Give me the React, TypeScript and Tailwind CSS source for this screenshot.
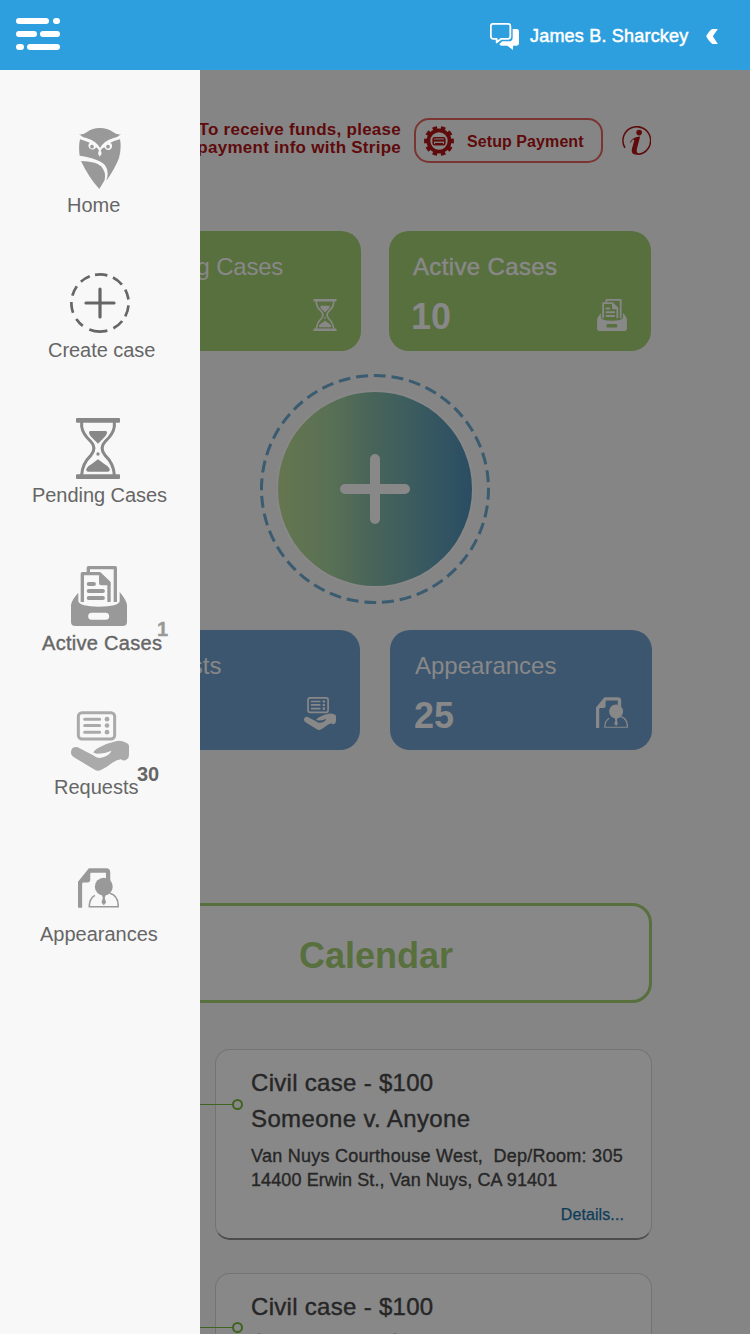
import type { ReactNode } from "react";

type IconProps = { className?: string };

function OwlIcon({ className }: IconProps) {
  return (
    <svg viewBox="0 0 126 183" className={className} fill="currentColor">
      <path d="M0 19Q14 21 24 12Q40 0 62 0Q86 0 102 12Q112 21 126 19Q118 27 102 31Q76 38 63 60Q50 38 24 31Q8 27 0 19Z" />
      <path
        fillRule="evenodd"
        d="M3 34Q20 39 32 44A12 12 0 1 0 51 58Q57 61 60 68Q56 74 58 79L62 86L67 79Q69 74 65 68Q68 61 76 58A12 12 0 1 0 94 44Q106 38 123 34Q128 60 120 90Q108 122 82 158Q92 130 78 112Q62 92 2 83Q-2 55 3 34Z"
      />
      <circle cx="39" cy="56" r="5.5" />
      <circle cx="87" cy="56" r="5.5" />
      <path d="M6 99Q50 100 66 115Q82 132 77 156L61 183Q30 150 6 99Z" />
    </svg>
  );
}

function CreateIcon({ className }: IconProps) {
  return (
    <svg viewBox="0 0 60 60" className={className} fill="none" stroke="currentColor">
      <circle
        cx="30"
        cy="30"
        r="28.6"
        strokeWidth="2.7"
        pathLength={360}
        strokeDasharray="25 12 23 12 21 12 23 11 23 13 37 15 19 14 22 13 21 12 21 11"
        transform="rotate(-100 30 30)"
      />
      <path d="M30 16V44M16 30H44" strokeWidth="3.2" strokeLinecap="round" />
    </svg>
  );
}

function HourglassIcon({ className }: IconProps) {
  return (
    <svg viewBox="0 0 132 183" className={className} fill="currentColor">
      <rect width="132" height="14" rx="3" />
      <rect y="169" width="132" height="14" rx="3" />
      <g fill="none" stroke="currentColor" strokeWidth="9">
        <path d="M17 12V26Q20 48 44 70Q64 91 44 113Q19 137 17 171" />
        <path d="M115 12V26Q112 48 88 70Q68 91 88 113Q113 137 115 171" />
      </g>
      <path d="M43 39H89Q95 40 92 48Q90 55 80 63L66 77L52 63Q42 55 40 48Q37 40 43 39Z" />
      <path d="M36 161Q28 160 32 151Q35 144 48 137L66 124L84 137Q97 144 100 151Q104 160 96 161Z" />
      <circle cx="66" cy="108" r="5" />
    </svg>
  );
}

function DrawerIcon({ className }: IconProps) {
  return (
    <svg viewBox="0 0 168 180" className={className} fill="currentColor">
      <g fill="none" stroke="currentColor" strokeWidth="10">
        <path d="M52 20V5H133V108" strokeLinejoin="round" />
        <path d="M34 108V23H86L114 50V108" strokeLinejoin="round" />
        <path d="M53 54H69M53 75H96M53 96H96" strokeWidth="11.5" strokeLinecap="round" />
      </g>
      <path d="M84 20L118 53V58H91Q84 58 84 51Z" />
      <path
        fillRule="evenodd"
        d="M0 116Q2 102 22 80V106Q26 122 84 122Q142 122 146 106V78Q166 102 168 116V167Q168 180 155 180H13Q0 180 0 167ZM62 140A10.500 10.500 0 0 0 62 161H104A10.500 10.500 0 0 0 104 140Z"
      />
    </svg>
  );
}

function RequestIcon({ className }: IconProps) {
  return (
    <svg viewBox="0 0 174 179" className={className} fill="currentColor">
      <rect x="22" y="4.500" width="109" height="79" rx="11" fill="none" stroke="currentColor" strokeWidth="9" />
      <path d="M41 24H86M41 43H86M41 63H86" stroke="currentColor" strokeWidth="9" strokeLinecap="round" />
      <circle cx="108" cy="24" r="7" />
      <circle cx="108" cy="43" r="7" />
      <circle cx="108" cy="63" r="7" />
      <path d="M20 108Q0 106 0 124Q0 133 10 139L70 175Q80 182 91 176Q108 168 124 155Q138 145 150 144Q154 148 162 148Q174 144 174 130V104Q174 98 164 94Q148 86 132 91Q108 96 84 109Q70 116 67 124L76 128Q102 128 122 118Q114 136 90 140Q76 142 68 133Z" />
    </svg>
  );
}

function AppearanceIcon({ className }: IconProps) {
  return (
    <svg viewBox="0 0 124 120" className={className} fill="currentColor">
      <path d="M6 120V44L36 7H85Q91 7 91 13V36" fill="none" stroke="currentColor" strokeWidth="13" />
      <path d="M2 43L32 4H37V36Q37 43 30 43Z" />
      <circle cx="78" cy="56" r="27" />
      <path d="M51 82Q34 92 34 117H122Q122 82 96 76" fill="none" stroke="currentColor" strokeWidth="4.500" />
      <path d="M72 80H84L81 90L85 104L78 112L71 104L75 90Z" />
    </svg>
  );
}

function ChatIcon({ className }: IconProps) {
  return (
    <svg viewBox="0 0 87 81" className={className} fill="currentColor">
      <path
        d="M9 2.500H54Q61 2.500 61 9.500V40Q61 47.500 54 47.500H34L20 58V47.500H9Q2.500 47.500 2.500 40V9.500Q2.500 2.500 9 2.500Z"
        fill="none"
        stroke="currentColor"
        strokeWidth="5.5"
        strokeLinejoin="round"
      />
      <path d="M68 18H80Q87 18 87 25V61Q87 68 80 68H69V81L52 68H35Q29 68 28 63L37 55H56Q68 55 68 44Z" />
    </svg>
  );
}

function GearCardIcon({ className }: IconProps) {
  return (
    <svg viewBox="0 0 30 30" className={className} fill="none" stroke="currentColor">
      <circle cx="15" cy="15" r="10.600" strokeWidth="3.800" />
      <circle cx="15" cy="15" r="13.200" strokeWidth="3.400" pathLength={100} strokeDasharray="5.500 4.500" transform="rotate(-82 15 15)" />
      <rect x="9.200" y="11.700" width="11.600" height="7" rx="1.500" strokeWidth="1.600" />
      <path d="M9 14.500H21" strokeWidth="2.200" />
      <path d="M11 17.600H19" strokeWidth="1.400" />
    </svg>
  );
}

function InfoIcon({ className }: IconProps) {
  return (
    <svg viewBox="0 0 88 88" className={className} fill="currentColor">
      <path d="M9 66A42 42 0 1 1 48 86" fill="none" stroke="currentColor" strokeWidth="4.5" />
      <circle cx="52" cy="20" r="8.500" />
      <path d="M24 49Q34 33 55 32L45 70Q43 82 51 84L48 87H44Q26 87 30 70L37 45Q38 39 33 42Q30 44 26 51Z" />
    </svg>
  );
}

function MenuIcon() {
  return (
    <div className="flex w-11 flex-col gap-[7px]">
      <div className="flex justify-between">
        <span className="h-[6px] w-[33px] rounded-full bg-white" />
        <span className="h-[6px] w-[7px] rounded-full bg-white" />
      </div>
      <div className="flex justify-between">
        <span className="h-[6px] w-[21px] rounded-full bg-white" />
        <span className="h-[6px] w-[20px] rounded-full bg-white" />
      </div>
      <div className="flex justify-between">
        <span className="h-[6px] w-[8px] rounded-full bg-white" />
        <span className="h-[6px] w-[33px] rounded-full bg-white" />
      </div>
    </div>
  );
}

function NavItem({
  size,
  icon,
  label,
  labelClass,
  badge,
  badgeClass = "",
}: {
  size: string;
  icon: ReactNode;
  label: string;
  labelClass: string;
  badge?: string;
  badgeClass?: string;
}) {
  return (
    <a className={`flex flex-col items-start justify-end ${size}`}>
      {icon}
      <span className={`relative whitespace-nowrap text-[20px] leading-none text-[#666] ${labelClass}`}>
        {label}
        {badge && <b className={`absolute ${badgeClass}`}>{badge}</b>}
      </span>
    </a>
  );
}

function StatCard({
  color,
  title,
  titleClass = "",
  value,
  valueClass = "-ml-px",
  icon,
}: {
  color: string;
  title: string;
  titleClass?: string;
  value: string;
  valueClass?: string;
  icon: ReactNode;
}) {
  return (
    <div className={`flex h-[120px] w-[262px] flex-col justify-between rounded-[20px] pb-[16px] pl-6 pr-6 pt-[24px] text-[#888] ${color}`}>
      <h2 className={`text-[24px] leading-none ${titleClass}`}>{title}</h2>
      <div className="flex items-end justify-between">
        <span className={`text-[36px] font-bold leading-none ${valueClass}`}>{value}</span>
        {icon}
      </div>
    </div>
  );
}

function CaseCard({ marker }: { marker: string }) {
  return (
    <article className="relative ml-[215px] flex h-[191px] w-[437px] shrink-0 flex-col rounded-[15px] border border-b-2 border-[#737373] border-b-[#4c4c4c] bg-[#888] pl-[35px] pt-[21px] text-[#262626]">
      <div className={`absolute left-[-117px] flex items-center ${marker}`}>
        <span className="h-px w-[133px] bg-[#3f6420]" />
        <span className="size-[11px] rounded-full border-2 border-[#3f6420]" />
      </div>
      <h3 className="text-[24px] leading-6 tracking-[0.3px] [-webkit-text-stroke:0.4px]">Civil case - $100</h3>
      <h3 className="mt-3 text-[24px] leading-6 tracking-[0.38px] [-webkit-text-stroke:0.4px]">Someone v. Anyone</h3>
      <p className="mt-[13px] whitespace-pre text-[18px] leading-6 tracking-[0.26px] [-webkit-text-stroke:0.35px]">
        Van Nuys Courthouse West,{"  "}Dep/Room: 305
      </p>
      <p className="text-[18px] leading-6 tracking-[0.1px] [-webkit-text-stroke:0.35px]">14400 Erwin St., Van Nuys, CA 91401</p>
      <a className="mr-[27px] mt-[15px] self-end text-[16px] leading-4 tracking-[0.1px] text-[#0c3c58] [-webkit-text-stroke:0.25px]">
        Details...
      </a>
    </article>
  );
}

export default function App() {
  return (
    <div className="relative flex h-[1334px] w-[750px] flex-col overflow-hidden bg-[#858585] font-['Liberation_Sans',Arial,sans-serif]">
      <header className="flex h-[70px] shrink-0 items-center bg-[#2e9fde] pb-0.5 pl-4 pr-8 text-white">
        <MenuIcon />
        <div className="ml-auto flex items-center">
          <ChatIcon className="mt-[4px] h-[27px] w-[29px]" />
          <span className="ml-[11px] mt-[3px] w-[160px] whitespace-nowrap text-[18px] leading-none tracking-[0.2px] [-webkit-text-stroke:0.5px]">
            James B. Sharckey
          </span>
          <svg viewBox="0 0 35 45" className="ml-4 mt-[5px] h-[15px] w-[12px]" fill="currentColor">
            <path d="M18 0H35L20 22L35 45H19Q10 40 0 22Q9 5 18 0Z" />
          </svg>
        </div>
      </header>

      <main className="flex flex-1 flex-col overflow-hidden pt-12">
        <section className="ml-[98px] flex h-[45px] w-[553px] shrink-0 items-center justify-end text-[#5f0a0b]">
          <p className="mr-[13px] mt-[-3px] whitespace-nowrap text-right text-[17px] font-bold leading-[18px] tracking-[0.26px]">
            To receive funds, please
            <br />
            setup payment info with Stripe
          </p>
          <button className="flex h-[45px] w-[189px] items-center rounded-[15px] border-2 border-[#7a3532] pl-2">
            <GearCardIcon className="size-[30px]" />
            <span className="ml-[13px] mt-[3px] whitespace-nowrap text-[16px] font-bold leading-none tracking-[0.08px]">Setup Payment</span>
          </button>
          <InfoIcon className="ml-[19px] size-[29px]" />
        </section>

        <section className="ml-[99px] mt-[68px] flex shrink-0 gap-7">
          <StatCard
            color="bg-[#586f3e]"
            title="Pending Cases"
            titleClass="tracking-[-0.2px]"
            value="5"
            icon={<HourglassIcon className="mb-1 h-8 w-6" />}
          />
          <StatCard
            color="bg-[#586f3e]"
            title="Active Cases"
            titleClass="tracking-[0.36px] [-webkit-text-stroke:0.5px]"
            value="10"
            valueClass="-ml-0.5"
            icon={<DrawerIcon className="mb-1 h-8 w-[30px]" />}
          />
        </section>

        <svg viewBox="0 0 230 230" className="ml-[260px] mt-[23px] size-[230px] shrink-0">
          <defs>
            <linearGradient id="fab">
              <stop offset="0" stopColor="#65764f" />
              <stop offset="0.25" stopColor="#5a7154" />
              <stop offset="0.5" stopColor="#47645a" />
              <stop offset="0.75" stopColor="#385960" />
              <stop offset="1" stopColor="#2a4d63" />
            </linearGradient>
          </defs>
          <circle
            cx="115"
            cy="115"
            r="113.500"
            fill="none"
            stroke="#3a5b70"
            strokeWidth="3"
            pathLength={400}
            strokeDasharray="6.700 3.300"
            transform="rotate(-90.600 115 115)"
          />
          <circle cx="115" cy="115" r="99" fill="#888" />
          <circle cx="115" cy="115" r="97" fill="url(#fab)" />
          <path d="M115 85V145M85 115H145" stroke="#888" strokeWidth="10" strokeLinecap="round" />
        </svg>

        <section className="ml-[98px] mt-[26px] flex shrink-0 gap-[30px]">
          <StatCard
            color="bg-[#3d566f]"
            title="Requests"
            titleClass="ml-[-2px]"
            value="30"
            icon={<RequestIcon className="mb-1 h-[33px] w-8" />}
          />
          <StatCard
            color="bg-[#3d566f]"
            title="Appearances"
            titleClass="ml-px"
            value="25"
            valueClass=""
            icon={<AppearanceIcon className="mb-1.5 h-[31px] w-8" />}
          />
        </section>

        <section className="ml-[98px] mt-[153px] flex h-[100px] w-[554px] shrink-0 items-center justify-center rounded-[20px] border-[3px] border-[#586f3e] bg-[#888] pl-0.5 pt-1.5 text-[36px] font-bold leading-none text-[#586f3e]">
          Calendar
        </section>

        <section className="mt-[46px] flex shrink-0 flex-col gap-[33px]">
          <CaseCard marker="top-[49px]" />
          <CaseCard marker="top-[48px]" />
        </section>
      </main>

      <nav className="absolute bottom-0 left-0 top-[70px] flex w-[200px] flex-col bg-[#f8f8f8]">
        <NavItem size="h-[145px]" icon={<OwlIcon className="ml-[79px] h-[61px] w-[42px] text-[#999]" />} label="Home" labelClass="ml-[67px] mt-[6px]" />
        <NavItem size="h-[145px]" icon={<CreateIcon className="ml-[70px] size-[60px] text-[#666]" />} label="Create case" labelClass="ml-[48px] mt-[7px] tracking-[-0.05px]" />
        <NavItem size="h-[145px]" icon={<HourglassIcon className="ml-[76px] h-[61px] w-[44px] text-[#888]" />} label="Pending Cases" labelClass="ml-[32px] mt-[6px] tracking-[-0.05px]" />
        <NavItem
          size="h-[148px]"
          icon={<DrawerIcon className="ml-[71px] h-[60px] w-[56px] text-[#999]" />}
          label="Active Cases"
          labelClass="ml-[42px] mt-[7px] tracking-[0.3px] [-webkit-text-stroke:0.4px]"
          badge="1"
          badgeClass="left-[115px] top-[-14px] text-[#999]"
        />
        <NavItem
          size="h-[144px]"
          icon={<RequestIcon className="ml-[71px] h-[60px] w-[58px] text-[#aaa]" />}
          label="Requests"
          labelClass="ml-[54px] mt-[6px]"
          badge="30"
          badgeClass="left-[83px] top-[-13px]"
        />
        <NavItem size="h-[147px]" icon={<AppearanceIcon className="ml-[78px] h-10 w-[41px] text-[#999]" />} label="Appearances" labelClass="ml-[40px] mt-[16px]" />
      </nav>
    </div>
  );
}
